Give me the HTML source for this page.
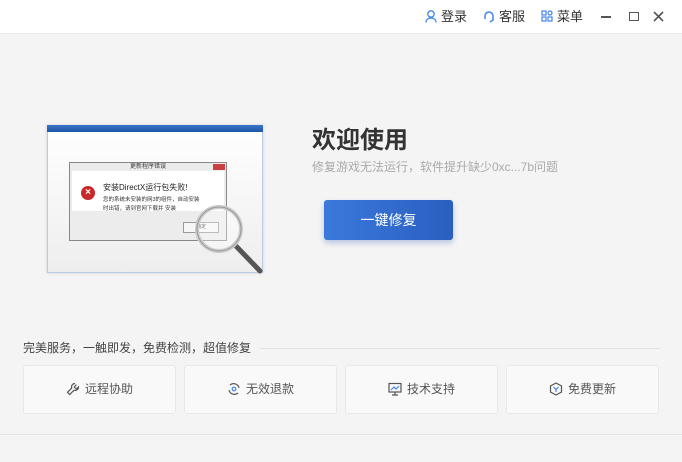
<!DOCTYPE html>
<html><head><meta charset="utf-8"><style>
*{margin:0;padding:0;box-sizing:border-box}
body{width:682px;height:462px;background:#f4f4f4;font-family:"Liberation Sans","Noto Sans CJK SC",sans-serif;position:relative;overflow:hidden;color:#333}
.top{position:absolute;left:0;top:0;width:682px;height:34px;background:#fff;border-bottom:1px solid #ececec}
.ti{position:absolute;top:9px;font-size:13px;color:#333;line-height:16px}
.abs{position:absolute}
.card{position:absolute;top:365px;width:153px;height:49px;background:#f9f9f9;border:1px solid #e8e8e8;border-radius:3px;font-size:12px;color:#555;text-align:center;line-height:47px}
.card svg{vertical-align:-3px;margin-right:5px}
</style></head><body>
<div class="top">
<svg class="abs" style="left:425px;top:10px" width="12" height="13" viewBox="0 0 12 13"><circle cx="6" cy="4" r="3.2" fill="none" stroke="#3f86e8" stroke-width="1.3"/><path d="M1 12.5c0-3 2.3-4.5 5-4.5s5 1.5 5 4.5" fill="none" stroke="#3f86e8" stroke-width="1.3"/></svg>
<div class="ti" style="left:441px">登录</div>
<svg class="abs" style="left:483px;top:10px" width="12" height="13" viewBox="0 0 12 13"><path d="M2 8V6a4 4 0 0 1 8 0v2M2 7v2M10 7v3l-3 2" fill="none" stroke="#3f86e8" stroke-width="1.5"/></svg>
<div class="ti" style="left:499px">客服</div>
<svg class="abs" style="left:541px;top:10px" width="12" height="12" viewBox="0 0 12 12" fill="none" stroke="#3f86e8" stroke-width="1.2"><rect x="1" y="1" width="4" height="4"/><circle cx="9" cy="3" r="2"/><rect x="1" y="7" width="4" height="4"/><rect x="7" y="7" width="4" height="4"/></svg>
<div class="ti" style="left:557px">菜单</div>
<div class="abs" style="left:601px;top:16px;width:10px;height:1.5px;background:#555"></div>
<div class="abs" style="left:629px;top:12px;width:10px;height:9px;border:1.5px solid #555"></div>
<svg class="abs" style="left:653px;top:11px" width="11" height="11" viewBox="0 0 11 11"><path d="M1 1l9 9M10 1l-9 9" stroke="#555" stroke-width="1.6"/></svg>
</div>

<div class="abs" style="left:47px;top:125px;width:216px;height:148px;background:linear-gradient(#fff,#eee);border:1px solid #b8cce4;box-shadow:0 0 3px rgba(0,0,0,.15)"></div>
<div class="abs" style="left:47px;top:125px;width:216px;height:7px;background:linear-gradient(#3d78c6,#1d55a8)"></div>
<div class="abs" style="left:69px;top:162px;width:158px;height:79px;background:#ececec;border:1px solid #888"></div>
<div class="abs" style="left:71px;top:163px;width:154px;height:8px;font-size:6px;text-align:center;line-height:8px;color:#333">更新程序错误</div>
<div class="abs" style="left:213px;top:164px;width:12px;height:6px;background:#c94040"></div>
<div class="abs" style="left:72px;top:171px;width:152px;height:40px;background:#fff"></div>
<div class="abs" style="left:81px;top:186px;width:14px;height:14px;border-radius:50%;background:#c8272b;color:#fff;font-size:10px;text-align:center;line-height:14px;font-weight:bold">×</div>
<div class="abs" style="left:103px;top:183px;font-size:8px;line-height:10px;color:#222">安装DirectX运行包失败!</div>
<div class="abs" style="left:103px;top:196px;font-size:5.5px;line-height:9px;color:#333;width:120px">您的系统未安装的网3的组件，自动安装<br>时出错，请到官网下载并 安装</div>
<div class="abs" style="left:183px;top:222px;width:36px;height:11px;border:1px solid #999;background:#f6f6f6;font-size:5px;line-height:9px;text-align:center">确定</div>
<svg class="abs" style="left:190px;top:200px" width="80" height="80" viewBox="0 0 80 80"><path d="M45 45l25 26" stroke="#555" stroke-width="5" stroke-linecap="round"/><circle cx="29" cy="29" r="22" fill="rgba(255,255,255,0.35)" stroke="#ccc" stroke-width="4"/><circle cx="29" cy="29" r="22" fill="none" stroke="#999" stroke-width="1"/></svg>

<div class="abs" style="left:312px;top:126px;font-size:24px;font-weight:bold;color:#333;line-height:30px">欢迎使用</div>
<div class="abs" style="left:312px;top:160px;font-size:12px;color:#aaa;line-height:14px">修复游戏无法运行，软件提升缺少0xc...7b问题</div>
<div class="abs" style="left:324px;top:200px;width:129px;height:40px;border-radius:3px;background:linear-gradient(90deg,#3a79db,#2a5fc0);box-shadow:0 3px 6px rgba(40,90,180,.3);color:#fff;font-size:14px;text-align:center;line-height:40px">一键修复</div>

<div class="abs" style="left:23px;top:341px;font-size:12px;color:#444;line-height:14px">完美服务，一触即发，免费检测，超值修复</div>
<div class="abs" style="left:260px;top:348px;width:400px;height:1px;background:#e2e2e2"></div>

<div class="card" style="left:23px"><svg width="14" height="14" viewBox="0 0 14 14" fill="none" stroke="#555" stroke-width="1.2"><path d="M9 1.5a3.5 3.5 0 0 0-3.3 4.6L1.5 10.3l2.2 2.2 4.2-4.2A3.5 3.5 0 0 0 12.5 5L10.3 7 8.3 5 10.4 2.6"/></svg>远程协助</div>
<div class="card" style="left:184px"><svg width="14" height="14" viewBox="0 0 14 14" fill="none" stroke="#555" stroke-width="1.2"><path d="M3 3a5.5 5.5 0 0 1 9 3M11 11a5.5 5.5 0 0 1-9-3"/><circle cx="7" cy="7" r="1.8" stroke="#3f86e8"/></svg>无效退款</div>
<div class="card" style="left:345px"><svg width="14" height="14" viewBox="0 0 14 14" fill="none" stroke="#555" stroke-width="1.2"><rect x="1" y="1.5" width="12" height="8.5"/><path d="M7 10v3M4 13h6"/><path d="M3 8l3-3 2 2 3-3" stroke="#3f86e8"/></svg>技术支持</div>
<div class="card" style="left:506px"><svg width="14" height="14" viewBox="0 0 14 14" fill="none" stroke="#555" stroke-width="1.2"><path d="M7 1l5.5 3v6L7 13 1.5 10V4z"/><path d="M4.5 5L7 7.5 9.5 5M7 7.5V10" stroke="#3f86e8"/></svg>免费更新</div>

<div class="abs" style="left:0;top:434px;width:682px;height:1px;background:#e3e3e3"></div>
</body></html>
